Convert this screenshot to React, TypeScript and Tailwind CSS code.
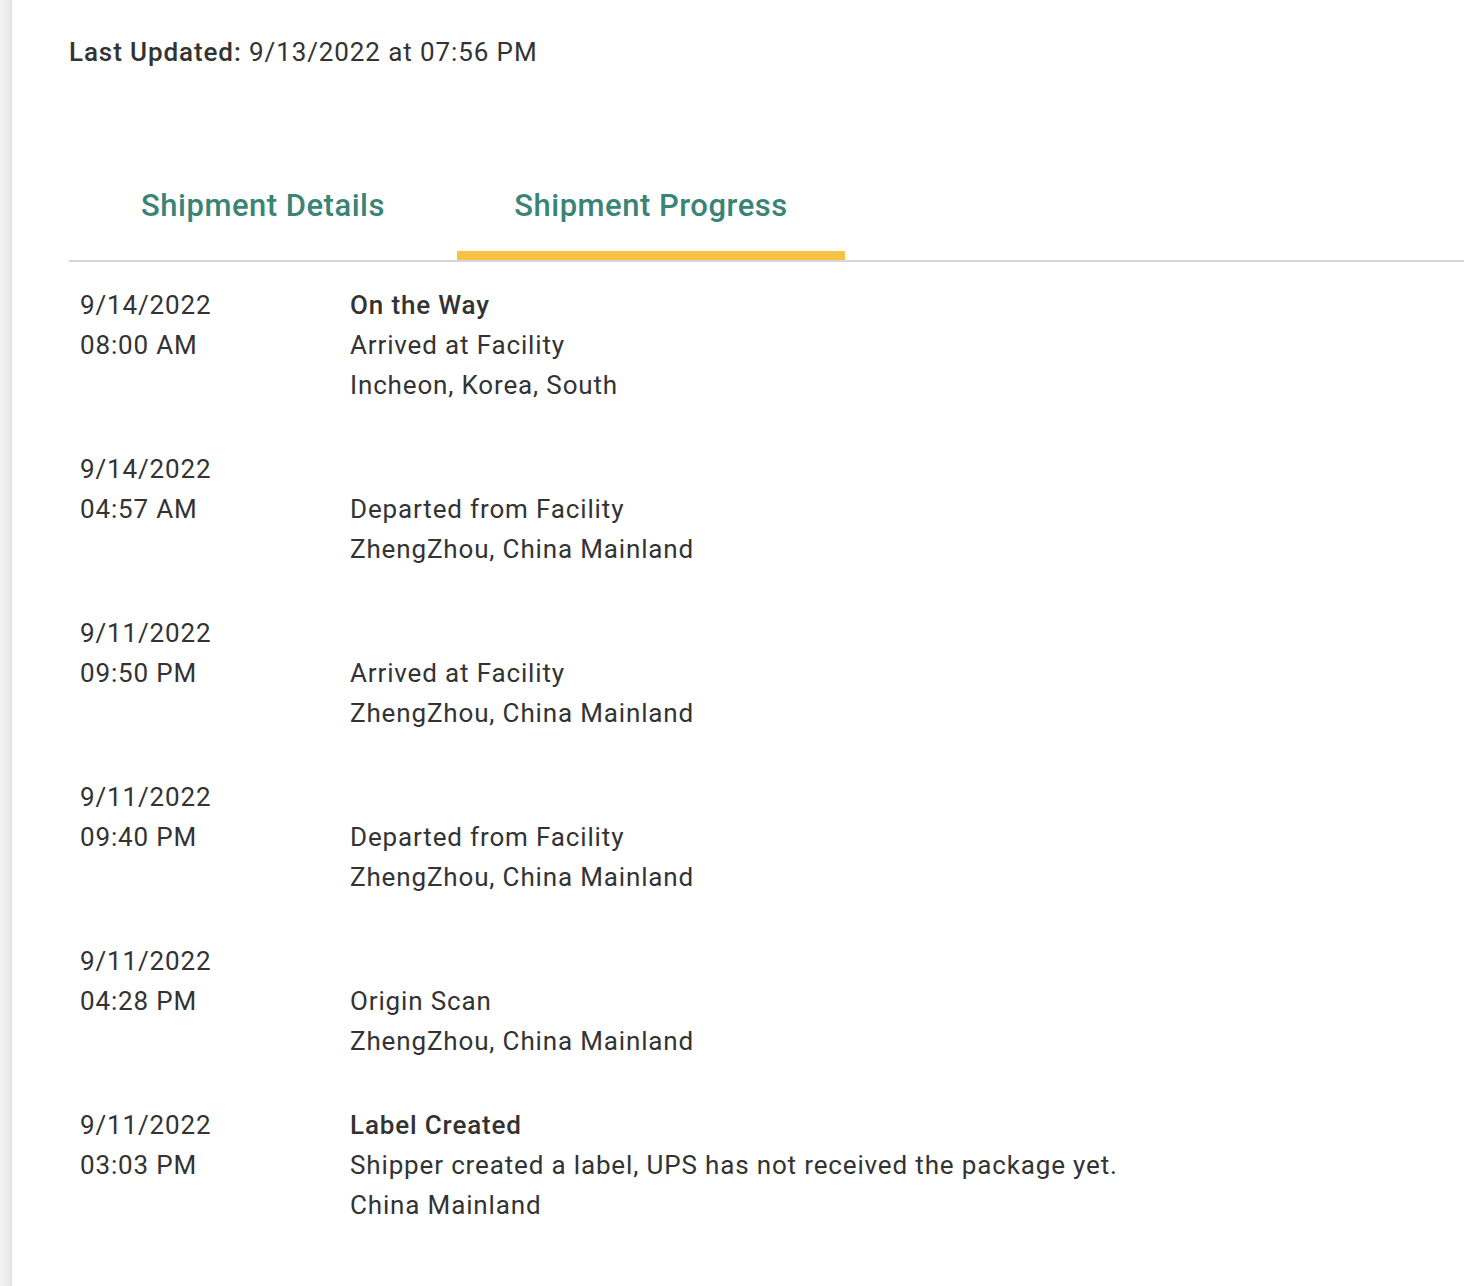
const events = [
  { date: '9/14/2022', time: '08:00 AM', status: 'On the Way', activity: 'Arrived at Facility', location: 'Incheon, Korea, South' },
  { date: '9/14/2022', time: '04:57 AM', status: '', activity: 'Departed from Facility', location: 'ZhengZhou, China Mainland' },
  { date: '9/11/2022', time: '09:50 PM', status: '', activity: 'Arrived at Facility', location: 'ZhengZhou, China Mainland' },
  { date: '9/11/2022', time: '09:40 PM', status: '', activity: 'Departed from Facility', location: 'ZhengZhou, China Mainland' },
  { date: '9/11/2022', time: '04:28 PM', status: '', activity: 'Origin Scan', location: 'ZhengZhou, China Mainland' },
  { date: '9/11/2022', time: '03:03 PM', status: 'Label Created', activity: 'Shipper created a label, UPS has not received the package yet.', location: 'China Mainland' },
];

export default function App() {
  return (
    <div className="flex min-h-[1286px] bg-white text-[#333333]" style={{ fontFamily: 'Roboto, "Liberation Sans", sans-serif' }}>
      <div className="w-[12px] shrink-0 bg-gradient-to-r from-[#f3f3f3] to-[#e9e9e9] border-r border-[#dcdcdc]" />
      <div className="flex-1 pl-[57px]">
        <p className="pt-[35px] text-[26px] leading-[34px] tracking-[0.9px]">
          <span className="font-medium">Last Updated:</span> 9/13/2022 at 07:56 PM
        </p>

        <div className="mt-[114px] flex border-b-2 border-[#d6d6d6]">
          <button className="w-[388px] h-[77px] text-[31px] font-medium text-[#3a8476] pb-[32px] tracking-[0.5px]">
            Shipment Details
          </button>
          <button className="relative w-[388px] h-[77px] text-[31px] font-medium text-[#3a8476] pb-[32px] tracking-[0.5px]">
            Shipment Progress
            <span className="absolute left-0 right-0 bottom-0 h-[9px] bg-[#f6c342]" />
          </button>
        </div>

        <div className="pt-[23px] pl-[11px] flex flex-col gap-[44px] text-[26px] leading-[40px] tracking-[0.85px]">
          {events.map((e, i) => (
            <div key={i} className="flex">
              <div className="w-[270px] shrink-0">
                <div>{e.date}</div>
                <div>{e.time}</div>
              </div>
              <div>
                <div className="font-medium h-[40px]">{e.status}</div>
                <div>{e.activity}</div>
                <div>{e.location}</div>
              </div>
            </div>
          ))}
        </div>
      </div>
    </div>
  );
}
